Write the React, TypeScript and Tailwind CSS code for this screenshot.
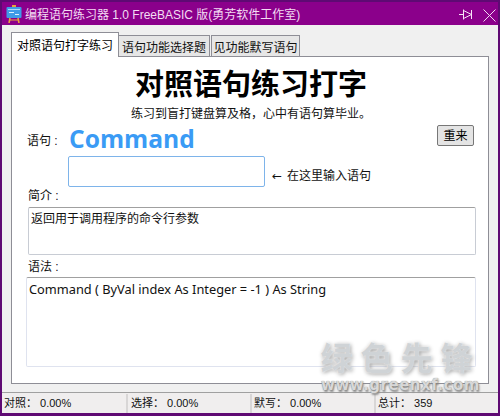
const cjk = "font-['Liberation_Sans','Noto_Sans_CJK_SC',sans-serif]"

function AppIcon() {
  return (
    <svg width="16" height="18" viewBox="0 0 16 18" className="shrink-0 -mt-[2px]">
      <rect x="6" y="0" width="4" height="2" fill="#e8a23a" />
      <rect x="0.5" y="2" width="15" height="11" rx="1" fill="#3f9be8" />
      <rect x="2" y="4" width="12" height="1" fill="#a9d8fa" />
      <rect x="3" y="7" width="5" height="1" fill="#d9f0ff" />
      <rect x="9" y="9" width="4" height="1" fill="#d9f0ff" />
      <path d="M4 13 L3 18 M12 13 L13 18" stroke="#e8a23a" strokeWidth="1.6" />
      <rect x="3" y="14.5" width="10" height="1" fill="#e8a23a" />
    </svg>
  )
}

function TitleBar() {
  return (
    <div className="h-[23px] bg-[#8b008b] flex items-center pl-[4px] pr-[2px] pt-[3px] shrink-0">
      <AppIcon />
      <span className="ml-[3px] text-[12px] leading-none text-[#f3dcf3] whitespace-nowrap">
        编程语句练习器 1.0 FreeBASIC 版(勇芳软件工作室)
      </span>
      <div className="ml-auto flex items-center gap-[10px]">
        {/* pin */}
        <svg width="14" height="12" viewBox="0 0 14 12" stroke="#f7e6f7" strokeWidth="1" fill="none">
          <path d="M0 5.5 H4.5 M4.5 0.5 V10.5 M4.5 1.5 L12.5 5.5 L4.5 9.5 M12.5 1 V10" />
        </svg>
        {/* close */}
        <svg width="13" height="13" viewBox="0 0 13 13" stroke="#f3d6f3" strokeWidth="1" fill="none">
          <path d="M0.5 0.5 L12.5 12.5 M12.5 0.5 L0.5 12.5" />
        </svg>
      </div>
    </div>
  )
}

function Tabs() {
  return (
    <div className="flex items-end h-[25px] -mb-px relative z-10 shrink-0">
      <div className="w-[108px] h-[25px] bg-white border border-[#8e8e96] border-b-0 flex items-center justify-center pt-[2px] text-[12px] text-black">
        对照语句打字练习
      </div>
      <div className="w-[91px] h-[22px] bg-[#e6e6e6] border border-[#8e8e96] border-l-0 flex items-center justify-center pt-[3px] text-[12px] text-[#111]">
        语句功能选择题
      </div>
      <div className="ml-px w-[89px] h-[22px] bg-[#e6e6e6] border border-[#8e8e96] flex items-center justify-center pt-[3px] text-[12px] text-[#111]">
        见功能默写语句
      </div>
    </div>
  )
}

function Panel() {
  return (
    <div className="w-[478px] h-[328px] bg-white border border-[#8e8e96] flex flex-col pl-[14px] pr-[12px] pt-[11px]">
      <h1 className="text-[29px] leading-[34px] font-bold text-black text-center">对照语句练习打字</h1>
      <p className="text-[12px] leading-[14px] text-[#111] text-center mt-[5px]">
        练习到盲打键盘算及格，心中有语句算毕业。
      </p>

      <div className="flex items-start mt-[5px] h-[29px]">
        <span className="text-[12px] leading-[16px] mt-[7px] ml-[1px] w-[42px] shrink-0 text-[#111]">语句 :</span>
        <span className="text-[24.6px] leading-[29px] mt-[-2px] font-bold text-[#3a9bf5] font-['Open_Sans','Noto_Sans',sans-serif]">
          Command
        </span>
        <button className="ml-auto mr-[2px] mt-[-1px] w-[37px] h-[21px] bg-[#e4e4e4] border border-[#777] rounded-[2px] text-[12px] text-black">
          重来
        </button>
      </div>

      <div className="flex items-end h-[31px] mt-[1px] ml-[42px]">
        <div className="w-[197px] h-[31px] bg-white border border-[#7eb4ea] rounded-[2px] shrink-0" />
        <span className="ml-[7px] text-[12px] leading-[16px] text-[#111] mb-[3px] flex items-center gap-[5px]">
          <span className="font-['DejaVu_Sans',sans-serif]">←</span>
          <span>在这里输入语句</span>
        </span>
      </div>

      <div className="text-[12px] leading-[14px] mt-[2px] ml-[2px] text-[#111]">简介 :</div>
      <div className="mt-[4px] ml-[2px] h-[48px] bg-white border border-[#c8ccd4] border-t-[#a0a0a0] rounded-[2px] px-[2px] py-[2px] text-[12px] leading-[18px] text-[#111]">
        返回用于调用程序的命令行参数
      </div>

      <div className="text-[12px] leading-[14px] mt-[5px] ml-[2px] text-[#111]">语法 :</div>
      <div className="mt-[3px] h-[90px] bg-white border border-[#dfe3ef] border-t-[#a0a0a0] rounded-[2px] px-[2px] py-[2px] text-[12.8px] leading-[18px] text-[#111] font-['Noto_Sans','Noto_Sans_CJK_SC',sans-serif]">
        Command ( ByVal index As Integer = -1 ) As String
      </div>
    </div>
  )
}

function StatusBar() {
  const cell = "h-[19px] flex items-center pl-[2px] text-[11px] leading-none text-[#111] border-r-2 border-[#d8d6d6] shrink-0"
  return (
    <div className="h-[21px] bg-[#f0eeee] border-t border-[#a0a0a0] flex items-center shrink-0">
      <div className={`${cell} w-[126px]`}>对照：&nbsp;0.00%</div>
      <div className={`${cell} w-[124px] pl-[3px]`}>选择：&nbsp;0.00%</div>
      <div className={`${cell} w-[124px]`}>默写：&nbsp;0.00%</div>
      <div className="h-[19px] flex items-center pl-[2px] text-[11px] leading-none text-[#111]">总计：&nbsp;359</div>
    </div>
  )
}

function Watermark() {
  return (
    <div className="absolute right-[15px] bottom-[21px] w-[165px] flex flex-col items-center gap-[2px] pointer-events-none">
      <div className="text-[32px] leading-[34px] tracking-[8px] font-bold text-[#cfd3d6] [text-shadow:0_0_2px_#ffffff,1px_1px_4px_#8a8a8a] whitespace-nowrap">
        绿色先锋
      </div>
      <div className="text-[15px] leading-[14px] font-bold tracking-[0.5px] text-[#d8d8d8] [text-shadow:0_0_1px_#777,1px_2px_2px_#888] whitespace-nowrap font-['DejaVu_Sans',sans-serif]">
        www.greenxf.com
      </div>
    </div>
  )
}

export default function App() {
  return (
    <div className={`${cjk} relative w-[500px] h-[416px] overflow-hidden bg-[#f0f0f0] border-[2px] border-[#5f0a73] border-b-[3px] flex flex-col`}>
      <TitleBar />
      <div className="flex-1 pl-[9px] pt-[7px]">
        <Tabs />
        <Panel />
      </div>
      <StatusBar />
      <Watermark />
    </div>
  )
}
